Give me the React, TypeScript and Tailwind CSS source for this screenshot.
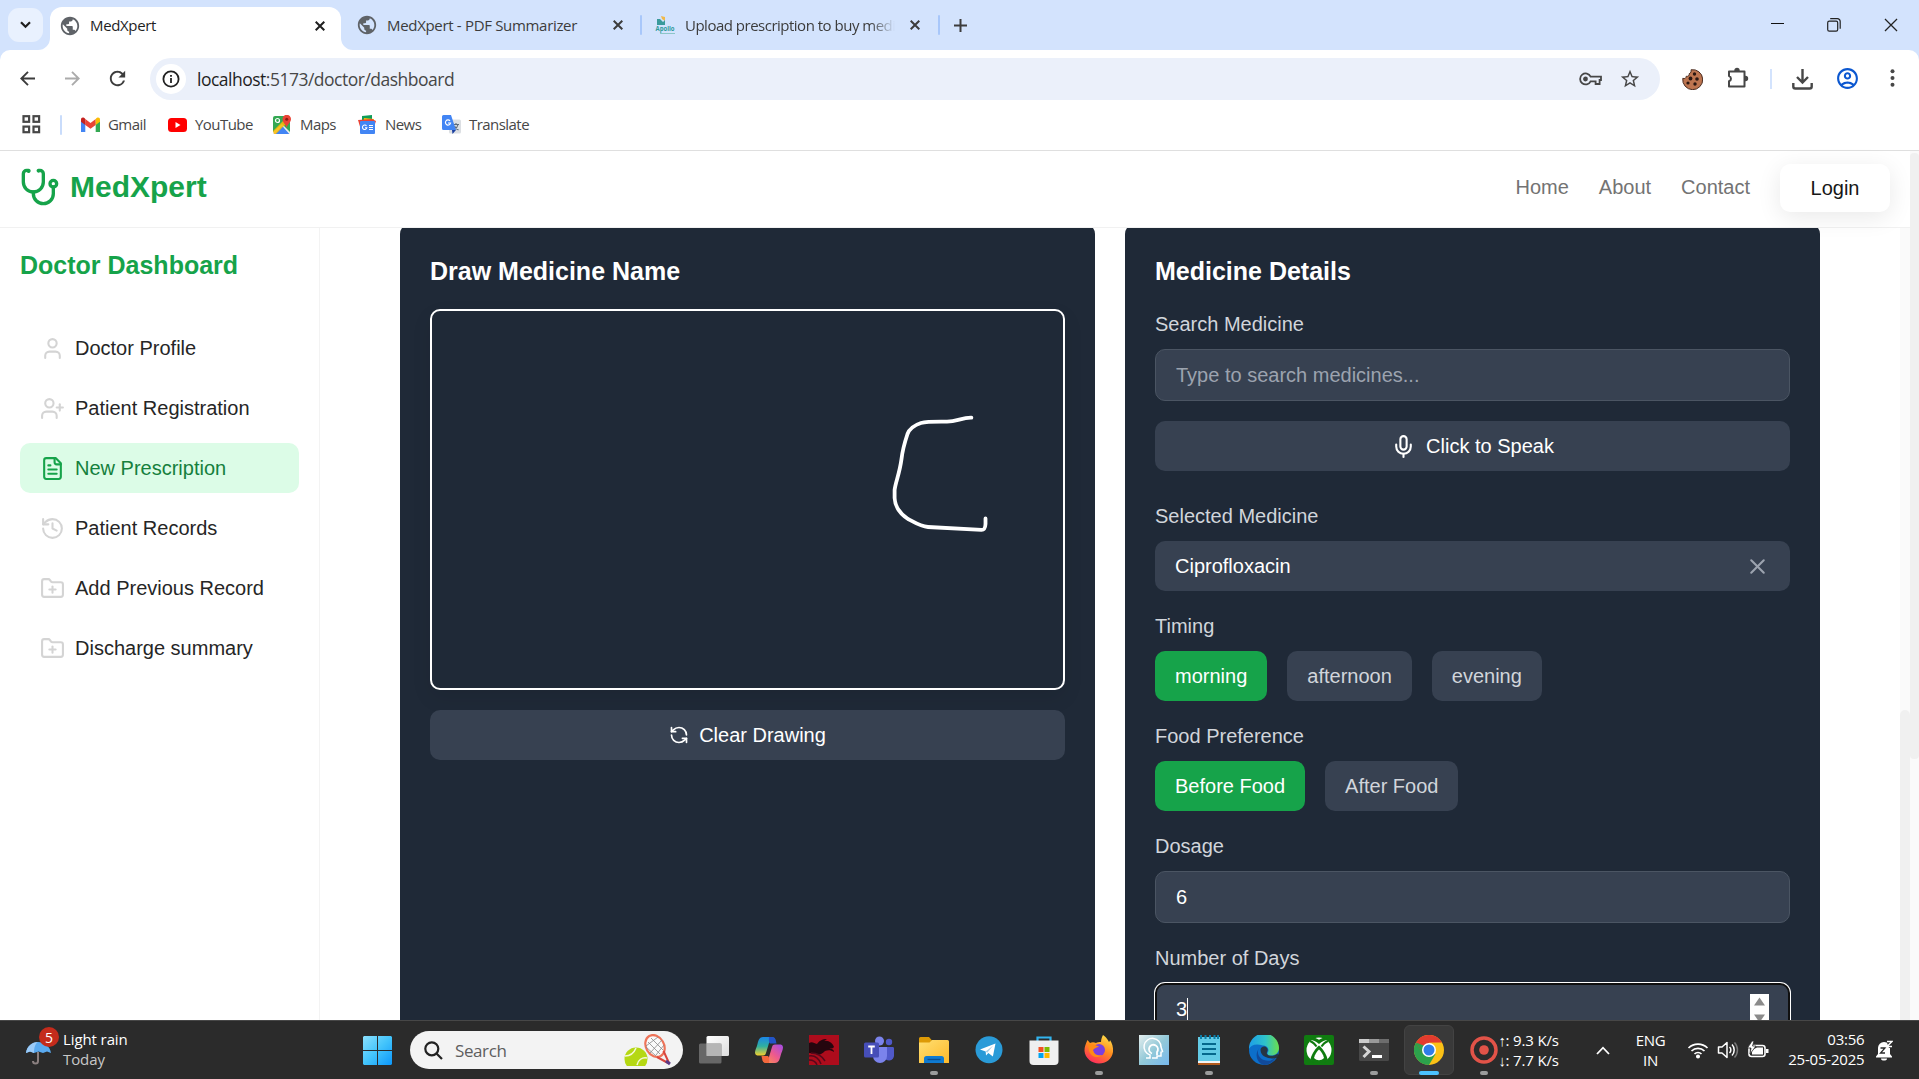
import React from "react";
import { FolderPlus, History, Mic, RefreshCcw, User, UserPlus, X } from "lucide-react";
import { MdPublic, MdRefresh, MdOutlineAccountCircle, MdStarBorder } from "react-icons/md";

const UI = "font-['Open_Sans','Noto_Sans',sans-serif]";

/* ---------- Browser chrome ---------- */

const Cross = ({ s = 10, w = 2, c = "#3c3c3c" }: { s?: number; w?: number; c?: string }) => (
  <svg width={s} height={s} viewBox="0 0 10 10" stroke={c} strokeWidth={w} fill="none">
    <path d="M.7.7l8.6 8.6M9.3.7L.7 9.3" />
  </svg>
);

const ApolloIcon = () => (
  <svg className="shrink-0 overflow-visible" width="20" height="19" viewBox="0 0 20 19">
    <path d="M6 0l4 1v4L7 3z" fill="#f0b94a" />
    <path d="M2 3h3l3 3v3H2zM7 7l3-3v5H7z" fill="#3a9a9c" />
    <text x="0.5" y="15" fontSize="7" fontWeight="700" textLength="19" lengthAdjust="spacingAndGlyphs" fill="#2f9a9b" fontFamily="Open Sans">Apollo</text>
    <path d="M5 17.5h15" stroke="#8cc6c8" strokeWidth="1" />
  </svg>
);

function TabStrip() {
  return (
    <div className="flex h-[50px] shrink-0 bg-[#d3e3fd]">
      <div className="ml-2 mt-2 flex h-[34px] w-[35px] items-center justify-center rounded-[11px] bg-[#e9f1fe]">
        <svg width="11" height="8" viewBox="0 0 11 8" fill="none" stroke="#1f1f1f" strokeWidth="2.2"><path d="M1 1.2l4.5 4.6L10 1.2" /></svg>
      </div>
      <div className="relative ml-[7px] mt-[7px] flex h-[43px] w-[291px] items-center rounded-t-[12px] bg-white pb-[6px] pl-[9px]">
        <svg className="absolute -left-3 bottom-0" width="12" height="12"><path d="M12 0v12H0A12 12 0 0 0 12 0z" fill="#fff" /></svg>
        <svg className="absolute -right-3 bottom-0" width="12" height="12"><path d="M0 0v12h12A12 12 0 0 1 0 0z" fill="#fff" /></svg>
        <MdPublic size={22} color="#5f6368" />
        <span className="ml-[9px] w-[225px] text-[15px] tracking-[-0.35px] text-[#1f1f1f]">MedXpert</span>
        <Cross c="#1f1f1f" />
      </div>
      <div className="flex h-[50px] items-center pl-[15px]">
        <MdPublic size={22} color="#5f6368" />
        <span className="ml-[9px] w-[226px] text-[15px] tracking-[-0.32px] text-[#3c3c3c]">MedXpert - PDF Summarizer</span>
        <Cross />
      </div>
      <div className="flex h-[50px] items-center">
        <span className="ml-[17px] mr-[13px] h-5 w-[2px] rounded bg-[#a8c7fa]" />
        <ApolloIcon />
        <span className="ml-[10px] w-[210px] overflow-hidden whitespace-nowrap text-[15px] tracking-[-0.5px] text-[#3c3c3c] [mask-image:linear-gradient(to_right,#000_88%,transparent)]">
          Upload prescription to buy medicines
        </span>
        <span className="ml-[15px] flex"><Cross /></span>
        <span className="ml-[18px] mr-[14px] h-5 w-[2px] rounded bg-[#a8c7fa]" />
        <svg width="13" height="13" stroke="#3c3c3c" strokeWidth="2"><path d="M6.5 0v13M0 6.5h13" /></svg>
      </div>
      <div className="ml-auto mr-[21px] flex h-[49px] items-center gap-[43px]">
        <svg width="13" height="13" stroke="#111"><path d="M0 5.5h13" /></svg>
        <svg width="14" height="14" fill="none" stroke="#222" strokeWidth="1.2"><rect x=".7" y="3.2" width="10" height="10" rx="1.6" /><path d="M3.2.7h7.2a2.8 2.8 0 0 1 2.8 2.8v7.2" /></svg>
        <Cross s={14} w={0.9} c="#222" />
      </div>
    </div>
  );
}

function Toolbar() {
  return (
    <div className="bg-[#d3e3fd]">
      <div className="flex h-[50px] items-center rounded-t-[10px] bg-white pb-0 pt-2">
        <div className="-mt-[2px] flex items-center">
          <svg className="ml-5" width="15" height="15" fill="none" stroke="#3c3c3c" strokeWidth="1.9"><path d="M15 7.5H1.5M8 .8L1.3 7.5 8 14.2" /></svg>
          <svg className="ml-[30px]" width="15" height="15" fill="none" stroke="#ababab" strokeWidth="1.9"><path d="M0 7.5h13.500M7 .8l6.700 6.700L7 14.200" /></svg>
          <MdRefresh className="ml-[26px]" size={23} color="#3c3c3c" />
        </div>
        <div className="ml-[21px] flex h-[42px] w-[1510px] items-center rounded-full bg-[#ebf0fa]">
          <div className="ml-[6px] flex size-[30px] items-center justify-center rounded-full bg-white">
            <svg width="18" height="18" fill="none" stroke="#222" strokeWidth="1.8"><circle cx="9" cy="9" r="7.6" /><path d="M9 8v5M9 4.900v1.900" /></svg>
          </div>
          <span className="ml-[11px] text-[17.5px] tracking-[-0.5px] text-[#474747]"><span className="text-[#1f1f1f]">localhost</span>:5173/doctor/dashboard</span>
          <svg className="ml-auto" width="23" height="14" viewBox="0 0 23 14" fill="none" stroke="#474747" strokeWidth="1.8"><path d="M11.6 4.600H22V8h-1.400v4h-4V9.300h-5A5.500 5.500 0 1 1 11.600 4.600z" /><circle cx="6.500" cy="7" r="1.500" fill="#474747" /></svg>
          <MdStarBorder className="ml-[17px] mr-[19px]" size={22} color="#474747" />
        </div>
        <svg className="ml-[22px]" width="21" height="21" viewBox="0 0 21 21"><path d="M9 .8a10 10 0 1 1-8.200 8.500c2 .8 3.500-.3 3.400-2 2 .4 3.400-.8 3-2.600C8.800 4 9.600 2.400 9 .8z" fill="#bd7550" stroke="#4a2c20" strokeWidth="1" /><g fill="#2a1712"><circle cx="12.500" cy="5" r="1.700" /><circle cx="8.500" cy="9.500" r="1.900" /><circle cx="15" cy="10" r="1.800" /><circle cx="6" cy="14" r="1.600" /><circle cx="13" cy="15" r="1.700" /></g></svg>
        <svg className="-mt-[2px] ml-[24px]" width="22" height="22" viewBox="0 0 22 22" fill="none" stroke="#474747" strokeWidth="2"><path d="M2 4.500h15.500v15H2v-5.200a2.700 2.700 0 0 0 0-5.200z" strokeLinejoin="round" /><path d="M8 3.500a2 2 0 0 1 4 0zM18.500 9.500a2 2 0 0 1 0 4z" fill="#474747" strokeWidth="1.400" /></svg>
        <span className="ml-[21px] h-5 w-[2px] bg-[#d3e3fd]" />
        <svg className="ml-[20px]" width="21" height="21" viewBox="0 0 21 21" fill="none" stroke="#474747" strokeWidth="2.400"><path d="M10.500 0v13M5 8l5.500 5.500L16 8M1.300 14v3.500a2 2 0 0 0 2 2h14.400a2 2 0 0 0 2-2V14" /></svg>
        <MdOutlineAccountCircle className="-mt-[2px] ml-[22px]" size={25} color="#0b57d0" />
        <svg className="-mt-[2px] ml-[30px]" width="5" height="18" fill="#474747"><circle cx="2.500" cy="2.300" r="2" /><circle cx="2.500" cy="9" r="2" /><circle cx="2.500" cy="15.700" r="2" /></svg>
      </div>
    </div>
  );
}

function BookmarksBar() {
  const items: { label: string; icon: React.ReactNode; w: string }[] = [
    { label: "Gmail", w: "w-[87px]", icon: <svg width="19" height="15" viewBox="0 0 19 15"><path d="M0 2.500V15h4.300V5z" fill="#4285f4" /><path d="M19 2.500V15h-4.300V5z" fill="#34a853" /><path d="M4.300 2v6L9.500 11.800 14.700 8V2L9.500 6z" fill="#ea4335" /><path d="M0 2.500v2.300L4.300 8V2C2.300-.5 0 .5 0 2.500z" fill="#c5221f" /><path d="M19 2.500v2.300L14.700 8V2C16.700-.5 19 .5 19 2.500z" fill="#fbbc04" /></svg> },
    { label: "YouTube", w: "w-[105px]", icon: <svg width="19" height="14"><rect width="19" height="14" rx="3.500" fill="#f00" /><path d="M7.500 4l5 3-5 3z" fill="#fff" /></svg> },
    { label: "Maps", w: "w-[85px]", icon: <svg width="19" height="19" viewBox="0 0 19 19"><rect y="1" width="17" height="18" rx="2" fill="#34a853" /><path d="M0 17L9 9l8 8v2H0z" fill="#e8eaed" /><path d="M2 19l7-8 7 8z" fill="#4285f4" /><path d="M0 16L14 2l3 3L3 19H1z" fill="#fbbc04" opacity=".85" /><path d="M4 19l6-7 6 7z" fill="#4285f4" /><circle cx="4.500" cy="5.500" r="2" fill="none" stroke="#fff" strokeWidth="1.200" /><path d="M13.500 13C13 9 9.500 8 9.500 4a4.200 4.200 0 0 1 8.500 0c0 4-4 5-4.500 9z" fill="#ea4335" /><circle cx="13.700" cy="4.300" r="1.500" fill="#8c1b12" /></svg> },
    { label: "News", w: "w-[84px]", icon: <svg width="19" height="19" viewBox="0 0 19 19"><path d="M4 1l10-1v9H4z" fill="#0f9d58" /><path d="M6 3l10 1-1 8H5z" fill="#fbbc04" /><path d="M0 5l14-1 4 2-3 9H3z" fill="#ea4335" /><rect x="2" y="6" width="15" height="13" rx="1" fill="#4285f4" /><path d="M8.500 11a2.200 2.200 0 1 0 .3 1.800H7M11 10.500h4M11 12.500h4M11 14.500h4" stroke="#fff" strokeWidth="1.100" fill="none" /></svg> },
    { label: "Translate", w: "w-[100px]", icon: <svg width="19" height="19" viewBox="0 0 19 19"><rect x="7" y="4.500" width="12" height="14" rx="1.500" fill="#dcdfe3" /><path d="M11 9.500h6M14 8v1.500M16 9.500c-.5 3-2.500 4.500-4 5.500M12.500 11c.8 2 2 3 4 4" stroke="#5f6c7b" strokeWidth="1.100" fill="none" /><path d="M1.500 0H9l5 15H1.500A1.500 1.500 0 0 1 0 13.500v-12A1.500 1.500 0 0 1 1.500 0z" fill="#4285f4" /><path d="M10 15h4l-3.500 4z" fill="#1a3fa0" /><path d="M8 5.800a2.600 2.600 0 1 0 .6 2.200H6" stroke="#fff" strokeWidth="1.200" fill="none" /></svg> },
  ];
  return (
    <div className="flex h-[51px] shrink-0 items-center border-b border-[#dfdfdf] bg-white pb-[1px]">
      <svg className="ml-[22px]" width="19" height="19" fill="none" stroke="#474747" strokeWidth="2.200"><rect x="1.500" y="1.200" width="5.600" height="5.600" /><rect x="11.500" y="1.200" width="5.600" height="5.600" /><rect x="1.500" y="11.600" width="5.600" height="5.600" /><rect x="11.500" y="11.600" width="5.600" height="5.600" /></svg>
      <span className="ml-[19px] mr-[19px] h-5 w-[2px] rounded bg-[#c9dcfb]" />
      {items.map((b) => (
        <div key={b.label} className={`flex items-center gap-2 ${b.w}`}>
          {b.icon}
          <span className="-mt-[1px] text-[15px] tracking-[-0.55px] text-[#474747]">{b.label}</span>
        </div>
      ))}
    </div>
  );
}

/* ---------- Web page ---------- */

const Stethoscope = () => (
  <svg width="40" height="40" viewBox="0 0 24 24" fill="none" stroke="#16a34a" strokeWidth="2" strokeLinecap="round" strokeLinejoin="round">
    <path d="M4.800 2.300A.3.300 0 1 0 5 2H4a2 2 0 0 0-2 2v5a6 6 0 0 0 6 6 6 6 0 0 0 6-6V4a2 2 0 0 0-2-2h-1a.2.200 0 1 0 .3.300" />
    <path d="M8 15v1a6 6 0 0 0 6 6 6 6 0 0 0 6-6v-4" />
    <circle cx="20" cy="10" r="2" />
  </svg>
);

const FileIcon = () => (
  <svg width="25" height="25" viewBox="0 0 24 24" fill="none" stroke="#16a34a" strokeWidth="2" strokeLinecap="round" strokeLinejoin="round">
    <path d="M15 2H6a2 2 0 0 0-2 2v16a2 2 0 0 0 2 2h12a2 2 0 0 0 2-2V7Z" />
    <path d="M14 2v4a2 2 0 0 0 2 2h4M10 9H8M16 13H8M16 17H8" />
  </svg>
);

function Navbar() {
  return (
    <header className="flex h-[77px] shrink-0 items-center border-b border-[#f1f1f1] bg-white pl-5 pr-5">
      <div className="-mt-[5px] flex items-center gap-[10px]">
        <Stethoscope />
        <span className="text-[30px] font-bold leading-10 text-[#16a34a]">MedXpert</span>
      </div>
      <nav className="-mt-[5px] ml-auto flex gap-[30px] text-[20px] leading-[30px] text-[#737373]">
        <span>Home</span>
        <span>About</span>
        <span>Contact</span>
      </nav>
      <button className="-mt-[2px] ml-[30px] h-[48px] w-[110px] rounded-[10px] bg-white text-[20px] text-[#171717] shadow-[0_5px_25px_rgba(0,0,0,0.09)]">Login</button>
    </header>
  );
}

function Sidebar() {
  const gray = "#d4d4d4";
  const items = [
    { label: "Doctor Profile", icon: <User size={25} color={gray} /> },
    { label: "Patient Registration", icon: <UserPlus size={25} color={gray} /> },
    { label: "New Prescription", icon: <FileIcon />, active: true },
    { label: "Patient Records", icon: <History size={25} color={gray} /> },
    { label: "Add Previous Record", icon: <FolderPlus size={25} color={gray} /> },
    { label: "Discharge summary", icon: <FolderPlus size={25} color={gray} /> },
  ];
  return (
    <aside className="w-[320px] shrink-0 border-r border-[#f3f3f3] px-5 pt-5">
      <h2 className="text-[25px] font-bold leading-[35px] text-[#16a34a]">Doctor Dashboard</h2>
      <nav className="mt-10 flex flex-col gap-[10px]">
        {items.map((i) => (
          <div key={i.label} className={`flex h-[50px] items-center gap-[10px] rounded-[10px] pl-5 text-[20px] ${i.active ? "bg-[#dcfce7] text-[#15803d]" : "text-[#262626]"}`}>
            {i.icon}
            {i.label}
          </div>
        ))}
      </nav>
    </aside>
  );
}

const Label = ({ children }: { children: React.ReactNode }) => (
  <div className="mb-[10px] text-[20px] leading-[30px] text-[#d1d5db]">{children}</div>
);

const Choice = ({ children, on }: { children: React.ReactNode; on?: boolean }) => (
  <button className={`h-[50px] rounded-[10px] px-5 text-[20px] ${on ? "bg-[#16a34a] text-white" : "bg-[#374151] text-[#d1d5db]"}`}>{children}</button>
);

function DrawCard() {
  return (
    <section className="h-[900px] w-[695px] rounded-[10px] bg-[#1f2937] p-[30px]">
      <h3 className="text-[25px] font-bold leading-[35px] text-white">Draw Medicine Name</h3>
      <div className="mt-5 h-[381px] rounded-[10px] border-2 border-white shadow-[0_8px_20px_rgba(0,0,0,0.08)]">
        <svg width="631" height="377" viewBox="432 311 631 377" fill="none" stroke="#fff" strokeWidth="3.800" strokeLinecap="round" strokeLinejoin="round">
          <path d="M971.400 417.700C962 417.500 957 421.600 947 421.700C930 421.700 927 421.500 921 423C912 426 909 430 907.500 434C904.500 443 902.500 450 901.500 459C899.500 474 895.500 482 894.600 490V498C895 507 899 513 908 519C914 522 920 526.500 928 527C946 528 964 529 981.500 529.800C984.500 529.800 985.300 528 985.500 524V518.500" />
        </svg>
      </div>
      <button className="mt-5 flex h-[50px] w-full items-center justify-center gap-[10px] rounded-[10px] bg-[#374151] text-[20px] text-white">
        <RefreshCcw size={20} />
        Clear Drawing
      </button>
    </section>
  );
}

function DetailsCard() {
  return (
    <section className="h-[900px] w-[695px] rounded-[10px] bg-[#1f2937] p-[30px] text-[20px] text-white">
      <h3 className="mb-5 text-[25px] font-bold leading-[35px]">Medicine Details</h3>
      <Label>Search Medicine</Label>
      <div className="flex h-[52px] items-center rounded-[10px] border border-[#4b5563] bg-[#374151] px-5 text-[#9ca3af]">Type to search medicines...</div>
      <button className="mb-[30px] mt-5 flex h-[50px] w-full items-center justify-center gap-[10px] rounded-[10px] bg-[#374151]">
        <Mic size={25} />
        Click to Speak
      </button>
      <Label>Selected Medicine</Label>
      <div className="mb-5 flex h-[50px] items-center justify-between rounded-[10px] bg-[#374151] px-5">
        Ciprofloxacin
        <X size={25} color="#9ca3af" />
      </div>
      <Label>Timing</Label>
      <div className="mb-5 flex gap-5">
        <Choice on>morning</Choice>
        <Choice>afternoon</Choice>
        <Choice>evening</Choice>
      </div>
      <Label>Food Preference</Label>
      <div className="mb-5 flex gap-5">
        <Choice on>Before Food</Choice>
        <Choice>After Food</Choice>
      </div>
      <Label>Dosage</Label>
      <div className="mb-5 flex h-[52px] items-center rounded-[10px] border border-[#4b5563] bg-[#374151] px-5">6</div>
      <Label>Number of Days</Label>
      <div className="flex h-[52px] items-center rounded-[10px] border-2 border-[#101010] bg-[#374151] px-[19px] shadow-[0_0_0_1px_#fff]">
        3<span className="h-[23px] w-px bg-white" />
        <svg className="ml-auto" width="19" height="30" viewBox="0 0 19 30"><path d="M0 0h19v30H0z" fill="#fff" /><path d="M4 11.500L9.500 3.500l5.500 8zM4 20.500l5.500 8 5.500-8z" fill="#8b8b8b" /></svg>
      </div>
    </section>
  );
}

function Page() {
  return (
    <div className="flex h-[869px] bg-white font-['Liberation_Sans',Arial,sans-serif]">
      <div className="flex w-[1910px] flex-col">
        <Navbar />
        <div className="flex h-[792px] overflow-hidden">
          <Sidebar />
          <main className="-mt-1 flex w-[1580px] gap-[30px] pl-20">
            <DrawCard />
            <DetailsCard />
          </main>
          <div className="w-[10px] bg-[#fafafa] pt-[482px]">
            <div className="h-[330px] rounded-t-[5px] bg-[#f0f0f0]" />
          </div>
        </div>
      </div>
      <div className="w-[9px] bg-[#fafafa] pt-[2px]">
        <div className="h-[606px] rounded-[4px] bg-[#f0f0f0]" />
      </div>
    </div>
  );
}

/* ---------- Taskbar ---------- */

const G = ({ children }: { children: React.ReactNode }) => (
  <svg width="30" height="30" viewBox="0 0 30 30">{children}</svg>
);

const apps: { id: string; run?: boolean; active?: boolean; icon: React.ReactNode }[] = [
  { id: "task-view", icon: <G><defs><linearGradient id="tv" x2="1" y2="1"><stop stopColor="#fff" /><stop offset="1" stopColor="#ddd" /></linearGradient></defs><rect x="7.500" y="1" width="22.500" height="20" rx="1.500" fill="url(#tv)" /><rect x="0" y="8.500" width="22.500" height="20" rx="1.500" fill="#777" opacity=".8" /><path d="M7.500 8.500h15V21h-15z" fill="#b5b5b5" /></G> },
  { id: "copilot", icon: <G><defs><linearGradient id="cp1" x2="0" y2="1"><stop stopColor="#1b86e8" /><stop offset=".5" stopColor="#2fb0a0" /><stop offset="1" stopColor="#f4d02c" /></linearGradient><linearGradient id="cp2" x1="1" x2="0" y2="1"><stop stopColor="#a24bea" /><stop offset=".5" stopColor="#ee5a8c" /><stop offset="1" stopColor="#fc9a4a" /></linearGradient></defs><path d="M17 2H9C5.500 2 4.500 5 3.500 9S1 15 1 17.500s1.600 3 4 3H9c2 0 2.700-1 3.300-3.500L15 8c.6-2 1.500-2.800 3.500-2.800h3C21 3.500 20 2 17 2z" fill="url(#cp1)" /><path d="M15 2h3c3 0 3.500 2 4.500 6.500h-6c-1 0-2-.5-1.500-6.500z" fill="#2354c8" /><path d="M13 28h8c3.500 0 4.500-3 5.500-7S29 15 29 12.500s-1.600-3-4-3H21c-2 0-2.700 1-3.300 3.500L15 22c-.6 2-1.500 2.800-3.500 2.800h-3C9 26.500 10 28 13 28z" fill="url(#cp2)" /><path d="M15 28h-3c-3 0-3.500-2-4.500-7h6c1 0 2 1 1.500 7z" fill="#f4683c" /></G> },
  { id: "kali", icon: <G><path d="M0 0h30v30H0z" fill="#ad0c1c" /><path d="M0 8c3-2 5 0 8 1 2-3 5-5 10-5l-3 2c5-1 9 3 10 6l-1 1c-1 1-3 0-4 0 2 1 5 1 5 4-3-2-6-2-9-1-3 3-5 4-8 3l-8-1z" fill="#25060e" /><path d="M0 21c6-1 10 3 12 8M0 25c4 0 7 2 8 5M2 18c6 0 11 3 14 8" stroke="#55081a" strokeWidth="1.500" fill="none" /></G> },
  { id: "teams", icon: <G><circle cx="25" cy="7" r="3.200" fill="#5059c9" /><path d="M20 12h8.500c1 0 1.500.5 1.500 1.500V20a5 5 0 0 1-10 1z" fill="#5059c9" /><circle cx="15.500" cy="6" r="4.500" fill="#7b83eb" /><path d="M9 12h14v9a7 7 0 0 1-14 0z" fill="#7b83eb" /><rect x="0" y="7.500" width="15" height="15" rx="1.500" fill="#464eb8" /><path d="M4.200 11.500h6.600M7.500 11.500v7.500" stroke="#fff" strokeWidth="1.800" /></G> },
  { id: "explorer", run: true, icon: <G><defs><linearGradient id="ex" x2="1" y2="1"><stop stopColor="#ffdf72" /><stop offset="1" stopColor="#fdb92a" /></linearGradient></defs><path d="M0 3.500A1.500 1.500 0 0 1 1.500 2H10l3 3.500L10 9H0z" fill="#dd9a06" /><path d="M0 7.500h10.500L13 5h15.500A1.500 1.500 0 0 1 30 6.500V28H0z" fill="url(#ex)" /><path d="M5 28v-4.500a2.500 2.500 0 0 1 2.500-2.500h15a2.500 2.500 0 0 1 2.500 2.500V28z" fill="#0f7ad1" /><path d="M8.500 24.500h13" stroke="#0a4e90" strokeWidth="1.300" /></G> },
  { id: "telegram", icon: <G><circle cx="15" cy="14.700" r="13.500" fill="#2a9bd8" /><path d="M6 14.500L21.500 8.500l-2.600 13-4.600-3.400-2.300 2.300-.3-4z" fill="#fff" /><path d="M11.700 16.400l7.500-5.900-6 7.200z" fill="#a9cfe6" /></G> },
  { id: "store", icon: <G><path d="M8.500 7V2.500h13V7" fill="none" stroke="#32b4ee" strokeWidth="2.200" /><path d="M.5 5.500h29V26a4 4 0 0 1-4 4h-21a4 4 0 0 1-4-4z" fill="#efefef" /><path d="M9.500 12h5v5h-5z" fill="#f25022" /><path d="M15.500 12h5v5h-5z" fill="#7fba00" /><path d="M9.500 18h5v5h-5z" fill="#00a4ef" /><path d="M15.500 18h5v5h-5z" fill="#ffb900" /></G> },
  { id: "firefox", run: true, icon: <G><defs><linearGradient id="ff" x1=".8" x2=".3" y2="1"><stop stopColor="#ffe14a" /><stop offset=".5" stopColor="#ff8a1e" /><stop offset="1" stopColor="#ff2a5e" /></linearGradient></defs><path d="M19 0c4 3 5 5 6 7 1-1 1-2 1-2 2 3 3.500 7 3 12C28 24 22 28.500 15 28.500S1 23 .5 16C.3 12 2 8 3.500 5L6 8c2-1 4-1 6 0 1-1 3-1 5-1 0-3 1-5 2-7z" fill="url(#ff)" /><circle cx="15" cy="15" r="6" fill="#7a3fe0" /><path d="M4 9c4 0 9 1 11 3-3 0-5 2-6 3 1 5 6 6 9 5-4 4-11 2-13-4z" fill="#ff8a16" /></G> },
  { id: "assistant", icon: <G><defs><linearGradient id="as" x2="1" y2="1"><stop stopColor="#e4eeee" /><stop offset=".5" stopColor="#93c9d8" /><stop offset="1" stopColor="#76b8ee" /></linearGradient></defs><path d="M0 0h30v30H0z" fill="url(#as)" /><path d="M7 23h4v-3a8.500 8.500 0 1 1 11-8l1.500 4.500-1.500.8V21h-4v2h-5" fill="none" stroke="#fff" strokeWidth="1.500" /><path d="M13 18.500a4.500 4.500 0 1 1 5-1.500v3" fill="none" stroke="#fff" strokeWidth="1.800" /></G> },
  { id: "notepad", run: true, icon: <G><path d="M4 2h22v26H4z" fill="#63cbe6" /><path d="M4 26h22v2H4z" fill="#f3f3f3" /><path d="M4 28h22v2H4z" fill="#b35a1c" /><path d="M8 9h14M8 14h14M8 19h14" stroke="#05688c" strokeWidth="2" /><path d="M7 0v4M11.500 0v4M16 0v4M20.500 0v4M24 0v4" stroke="#0c7ea8" strokeWidth="2" /></G> },
  { id: "edge", icon: <G><defs><linearGradient id="eg" x2="1"><stop stopColor="#1d9ee8" /><stop offset=".55" stopColor="#2fc3c9" /><stop offset="1" stopColor="#6be04c" /></linearGradient></defs><circle cx="15" cy="15" r="15" fill="#0c6fca" /><path d="M0 14A15 15 0 0 1 30 13c0 5-4 7.500-8 7.500-3 0-4.500-1.500-3-3.500 1.500-3-1-6.500-5-6.500C7 8 1.500 10 0 14z" fill="url(#eg)" /><path d="M11 12c-4 4-2 11 4 13 5 2 9 0 12-3-3 6-8 8-12 8C9 29 4 20 11 12z" fill="#114a9a" /><path d="M11.500 15c0-3 4-5 6.500-2 2 2.500-1 4.500 0 6 2 3 8 2 10.500-.5L30 22l-2 1c-4 1-16 1-16.500-8z" fill="#2b2b2b" opacity=".85" /></G> },
  { id: "xbox", icon: <G><rect width="30" height="30" rx="2" fill="#107c10" /><circle cx="15" cy="15" r="12.500" fill="#fff" /><path d="M6.500 24C8 18 12 13 15 10.500 18 13 22 18 23.500 24L20 29H10z" fill="#107c10" /><path d="M10 23c1-4 3-6.500 5-8.500 2 2 4 4.500 5 8.500-3 3-7 3-10 0z" fill="#fff" /><path d="M6 5c3 0 6 1.500 9 4 3-2.500 6-4 9-4l-3-2.500c-2 .2-4 1.200-6 2.200-2-1-4-2-6-2.200z" fill="#107c10" /><path d="M6 6c3 1 5 3 6.500 5.500M24 6c-3 1-5 3-6.500 5.500" stroke="#107c10" strokeWidth="2" /></G> },
  { id: "terminal", run: true, icon: <G><rect y="4" width="30" height="22" rx="1.500" fill="#484848" /><path d="M0 4h10v4H0z" fill="#ccc" /><path d="M10 4h10v4H10z" fill="#999" /><path d="M20 4h10v4H20z" fill="#6d6d6d" /><path d="M4.500 11.500l5.500 5-5.500 5.500" fill="none" stroke="#d5d5d5" strokeWidth="3" /><path d="M13 21.500h10" stroke="#fff" strokeWidth="3" /></G> },
  { id: "chrome", active: true, icon: <G><circle cx="15" cy="15" r="15" fill="#fbc116" /><path d="M15 15L2 7.500A15 15 0 0 0 15 30l6.500-11z" fill="#2ca24c" /><path d="M15 15L2 7.500A15 15 0 0 1 28 7.500H15z" fill="#e33b2e" /><path d="M2 7.500l6.500 11.300L15 8h13z" fill="#e33b2e" /><path d="M2 7.500l7 12 3-8z" fill="#2ca24c" /><circle cx="15" cy="15" r="7" fill="#fff" /><circle cx="15" cy="15" r="5.500" fill="#2f7de9" /></G> },
  { id: "recorder", run: true, icon: <G><circle cx="15" cy="15" r="12" fill="none" stroke="#e25348" strokeWidth="3.500" /><circle cx="15" cy="15" r="4.800" fill="#e25348" /></G> },
];

function Taskbar() {
  return (
    <footer className={`flex h-[59px] items-center border-t border-[#474747] bg-[#2b2b2b] ${UI}`}>
      <div className="flex w-[350px] items-center">
        <div className="relative ml-[26px] h-[30px] w-[37px]">
          <svg className="absolute left-0 top-[6px]" width="26" height="24" viewBox="0 0 26 24"><path d="M0 12C1 5 6 1 12 1s12 4 13 11l-4-1.500L17 12l-4.500-1.500L8 12l-4-1.500z" fill="#5aaaf0" /><path d="M0 12C1 5 6 1 12 1 9 3 8 7 8 12l-4-1.500z" fill="#9bcbf8" /><path d="M12 11v9a2.500 2.500 0 0 1-5 0" fill="none" stroke="#8b8080" strokeWidth="2" /></svg>
          <div className="absolute -top-[8px] left-[13px] flex size-5 items-center justify-center rounded-full bg-[#c42b1c] text-[14px] text-white">5</div>
        </div>
        <div className="-mt-[3px] text-[15px] leading-5 tracking-[-0.1px] text-white">
          Light rain
          <div className="text-[#c8c8c8]">Today</div>
        </div>
      </div>
      <div className="flex w-[55px] justify-center">
        <svg width="29" height="29"><defs><linearGradient id="win" x2="1" y2="1"><stop stopColor="#8be0fd" /><stop offset=".5" stopColor="#43c4fb" /><stop offset="1" stopColor="#0c97fb" /></linearGradient></defs><path d="M1 0h13v14H0V1zM15 0h13l1 1v13H15zM0 15h14v14H1l-1-1zM15 15h14v13l-1 1H15z" fill="url(#win)" /></svg>
      </div>
      <div className="ml-[5px] flex h-[38px] w-[273px] items-center rounded-full bg-[#f3f3f3] pl-[14px]">
        <svg width="19" height="19" fill="none" stroke="#222" strokeWidth="2.200"><circle cx="7.800" cy="7.800" r="6.500" /><path d="M12.500 12.500l5.500 5.500" /></svg>
        <span className="ml-[12px] mt-[2px] w-[169px] text-[17px] tracking-[-0.4px] text-[#5e5e5e]">Search</span>
        <svg width="48" height="32" viewBox="0 0 48 32"><circle cx="12" cy="25" r="11.500" fill="#b5d813" /><path d="M1 22c5 0 9-3 11-8M13 31c1-5 5-8 10-7" fill="none" stroke="#f5f9d8" strokeWidth="1.500" /><ellipse cx="31" cy="12" rx="9" ry="11.500" transform="rotate(-30 31 12)" fill="#fafafa" stroke="#ee7459" strokeWidth="2.200" /><path d="M24 8l12 12M27 4l12 12M22 13l10 9M38 6L26 19M34 3L22 12M40 11l-8 10" stroke="#888" strokeWidth=".8" /><path d="M33 23l11 6M39.500 17L45 29" stroke="#d9463e" strokeWidth="2" /><path d="M42 27l4 3" stroke="#5a3a86" strokeWidth="3" /></svg>
      </div>
      <div className="ml-[3.5px] flex">
        {apps.map((a) => (
          <div key={a.id} className="relative flex h-[50px] w-[55px] items-center justify-center">
            {a.active && <div className="absolute inset-x-[2.5px] inset-y-0 rounded-[6px] border border-[#434343] bg-[#393939]" />}
            <div className="relative">{a.icon}</div>
            {a.run && <div className="absolute bottom-0 h-1 w-2 rounded-full bg-[#9c9c9c]" />}
            {a.active && <div className="absolute bottom-0 h-1 w-5 rounded-full bg-[#4cc2ff]" />}
          </div>
        ))}
      </div>
      <div className="-ml-[11px] w-[90px] whitespace-nowrap text-[15px] leading-5 tracking-[-0.15px] text-white">
        <div><span className="-ml-[2px] inline-block w-[7px] overflow-visible">↑</span>: 9.3 K/s</div>
        <div><span className="-ml-[2px] inline-block w-[7px] overflow-visible">↓</span>: 7.7 K/s</div>
      </div>
      <div className="flex w-[25px] justify-center">
        <svg width="14" height="9" fill="none" stroke="#fff" strokeWidth="1.800"><path d="M1 8l6-6.300L13 8" /></svg>
      </div>
      <div className="w-[70px] text-center text-[15px] leading-5 tracking-[-0.3px] text-white">ENG<br />IN</div>
      <div className="ml-[1px] flex items-center gap-2">
        <svg width="22" height="18" viewBox="0 0 22 18" fill="none" stroke="#fff" strokeWidth="1.700"><path d="M1.500 7a13.500 13.500 0 0 1 19 0M4.500 10a9.200 9.200 0 0 1 13 0M7.500 13a5 5 0 0 1 7 0" /><circle cx="11" cy="15.500" r="1.200" fill="#fff" /></svg>
        <svg width="22" height="18" viewBox="0 0 22 18" fill="none" stroke="#fff" strokeWidth="1.500"><path d="M1.500 6h3.500l5-4.500v15L5 12H1.500z" strokeLinejoin="round" /><path d="M12.500 6a4 4 0 0 1 0 6M15 3.500a8 8 0 0 1 0 11" /><path d="M17.500 1.500a11 11 0 0 1 0 15" stroke="#777" /></svg>
        <svg width="22" height="18" viewBox="0 0 22 18"><rect x="2" y="4.500" width="16" height="11" rx="2.500" fill="none" stroke="#fff" strokeWidth="1.600" /><path d="M5 9l5-2.500h6v7H5z" fill="#fff" /><path d="M19 8h2.500v4H19z" fill="#fff" /><path d="M5 0L.5 7H4l-1 6 6-8H5.500L7 0z" fill="#fff" stroke="#2b2b2b" strokeWidth=".8" /></svg>
      </div>
      <div className="-mt-[3px] w-[96px] text-right text-[15px] leading-5 tracking-[-0.2px] text-white">03:56<br />25-05-2025</div>
      <svg className="ml-[10px]" width="18" height="21" viewBox="0 0 18 21"><path d="M3 14V8a6 6 0 0 1 6-6c4 0 6 3 6 6v6l2 2.500v1H1v-1z" fill="#fff" /><path d="M6 18.500h6a3 2 0 0 1-6 0z" fill="#fff" /><path d="M5.500 8h4.500l-4.500 5h4.500" stroke="#2b2b2b" strokeWidth="1.300" fill="none" /><path d="M11 0h7v8h-4z" fill="#2b2b2b" /><path d="M12 1.500h5l-5 5h5" stroke="#fff" strokeWidth="1.400" fill="none" /></svg>
    </footer>
  );
}

export default function App() {
  return (
    <div className={`h-[1079px] w-[1919px] overflow-hidden bg-white ${UI}`}>
      <TabStrip />
      <Toolbar />
      <BookmarksBar />
      <Page />
      <Taskbar />
    </div>
  );
}
